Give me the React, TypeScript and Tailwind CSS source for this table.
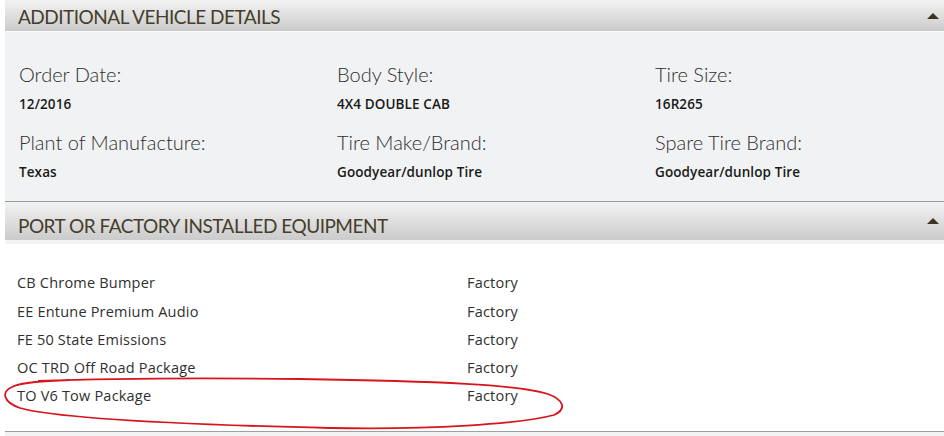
import React from "react";

const details = [
  { label: "Order Date:", value: "12/2016" },
  { label: "Body Style:", value: "4X4 DOUBLE CAB" },
  { label: "Tire Size:", value: "16R265" },
  { label: "Plant of Manufacture:", value: "Texas" },
  { label: "Tire Make/Brand:", value: "Goodyear/dunlop Tire" },
  { label: "Spare Tire Brand:", value: "Goodyear/dunlop Tire" },
];

const equipment = [
  "CB Chrome Bumper",
  "EE Entune Premium Audio",
  "FE 50 State Emissions",
  "OC TRD Off Road Package",
  "TO V6 Tow Package",
];

function Caret() {
  return (
    <svg width="12" height="6" viewBox="0 0 12 6" className="block">
      <polygon points="0,6 6,0 12,6" fill="#3b3424" />
    </svg>
  );
}

function SectionHeader({ title, tall }: { title: string; tall?: boolean }) {
  return (
    <div
      className={`flex items-center justify-between bg-gradient-to-b from-[#f3f3f3] to-[#cbcbcb] pl-[13px] pr-[5px] ${
        tall ? "h-[38px] pt-[8px]" : "h-[31px] pt-[2px]"
      }`}
    >
      <span
        className="text-[19px] leading-none text-[#453e2b] tracking-[-0.5px]"
        style={{ fontFamily: "Lato, 'Open Sans', sans-serif" }}
      >
        {title}
      </span>
      <div className={tall ? "-mt-[8px]" : "-mt-[2px]"}>
        <Caret />
      </div>
    </div>
  );
}

export default function App() {
  return (
    <div className="relative h-[436px] w-[944px] overflow-hidden bg-white">
      <div className="pl-[5px]">
        <SectionHeader title="ADDITIONAL VEHICLE DETAILS" />
        <div className="h-px bg-[#fafafa]" />
        <div className="grid h-[169px] grid-cols-[318px_318px_1fr] content-start gap-y-[17px] bg-[#f1f2f3] pl-[14px] pt-[31px]">
          {details.map((d) => (
            <div key={d.label} className="flex flex-col">
              <span
                className="text-[20px] font-light leading-[22px] text-[#2e2e2e]"
                style={{ fontFamily: "Lato, sans-serif" }}
              >
                {d.label}
              </span>
              <span
                className="mt-[9px] text-[13.5px] font-semibold leading-[20px] tracking-[0.1px] text-[#1a1a1a]"
                style={{ fontFamily: "'Open Sans', sans-serif" }}
              >
                {d.value}
              </span>
            </div>
          ))}
        </div>
        <div className="h-px bg-[#9a9a9a]" />
        <SectionHeader title="PORT OR FACTORY INSTALLED EQUIPMENT" tall />
        <div className="h-[4px] bg-[#f4f4f4]" />
        <div className="h-[187px] pl-[12px] pt-[25px]">
          {equipment.map((e) => (
            <div
              key={e}
              className="grid h-[28.3px] grid-cols-[450px_1fr] items-center text-[14.5px] font-medium tracking-[0.2px] text-[#2f2f2f]"
              style={{ fontFamily: "'Open Sans', sans-serif" }}
            >
              <span>{e}</span>
              <span>Factory</span>
            </div>
          ))}
        </div>
        <div className="h-px bg-[#a0a0a0]" />
        <div className="h-[5px] bg-[#f3f3f3]" />
      </div>
      <svg
        className="pointer-events-none absolute left-0 top-0"
        width="944"
        height="436"
        viewBox="0 0 944 436"
      >
        <path
          d="M 70 380 C 45 381, 22 382, 12 387 C 1 392, 3 402, 20 408 C 60 419, 200 425, 330 428 C 430 430, 520 424, 554 415 C 567 409, 564 400, 548 394 C 520 385, 440 381, 300 379 C 220 378, 120 378, 38 381"
          fill="none"
          stroke="#d9141c"
          strokeWidth="1.8"
        />
      </svg>
    </div>
  );
}
